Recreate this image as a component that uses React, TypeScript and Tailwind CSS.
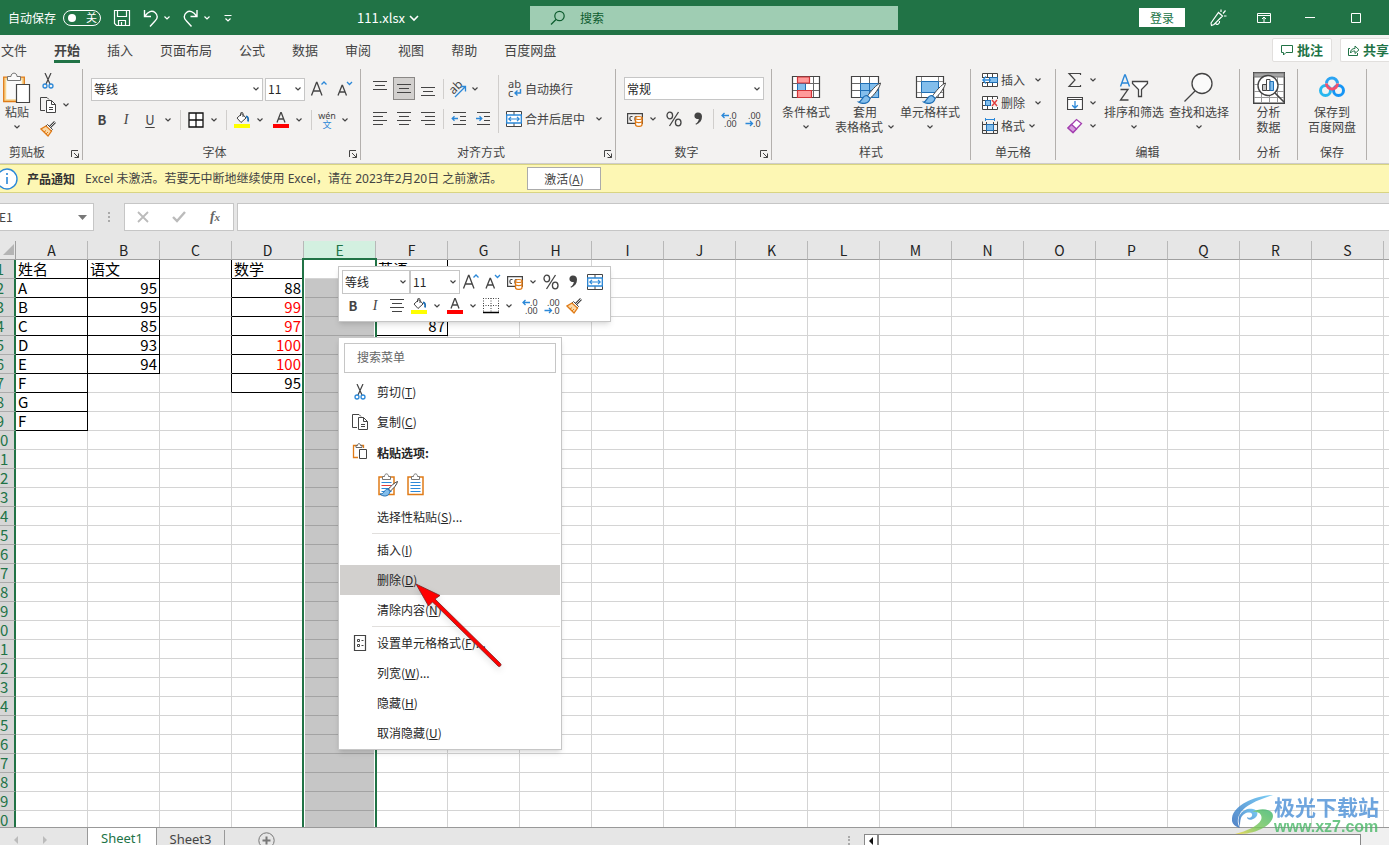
import type { ReactNode } from 'react';

type Seg = [number, number, number];

const COLS = 'ABCDEFGHIJKLMNOPQRST'.split('');
const ROWS = Array.from({ length: 30 }, (_, i) => i + 1);

const DATA: Record<string, string[]> = {
  A: ['姓名', 'A', 'B', 'C', 'D', 'E', 'F', 'G', 'F'],
  B: ['语文', '95', '95', '85', '93', '94'],
  D: ['数学', '88', '99', '97', '100', '100', '95'],
  F: ['英语', '', '', '87'],
};

const isBoxed = (col: number, row: number) => row >= 1 && row <= (DATA[COLS[col]]?.length ?? 0);

/* ---------- icons ---------- */

function Svg({ w = 16, h = 16, children }: { w?: number; h?: number; children: ReactNode }) {
  return (
    <svg width={w} height={h} viewBox={`0 0 ${w} ${h}`} fill="none" stroke="#444" className="block shrink-0" aria-hidden="true">
      {children}
    </svg>
  );
}

function Chev({ color = '#444' }: { color?: string }) {
  return (
    <Svg w={8} h={6}>
      <path d="M1.5 1.5 4 4l2.5-2.5" stroke={color} strokeWidth="1.2" />
    </Svg>
  );
}

// each segment is [y, x1, x2]
function Lines({ rows }: { rows: Seg[] }) {
  return (
    <Svg>
      {rows.map(([y, a, b]) => (
        <path key={y} d={`M${a} ${y}.5H${b}`} />
      ))}
    </Svg>
  );
}

const CENTER: Seg[] = [[1, 1, 15], [5, 3, 13], [9, 1, 15], [13, 3, 13]];
const LEFT: Seg[] = [[1, 1, 15], [5, 1, 11], [9, 1, 15], [13, 1, 11]];
const RIGHT: Seg[] = [[1, 1, 15], [5, 5, 15], [9, 1, 15], [13, 5, 15]];

function Scissors() {
  return (
    <Svg>
      <path d="M5 0 10 11M11 0 6 11" strokeWidth="1.2" />
      <circle cx="5" cy="13" r="2" stroke="#2b88d8" strokeWidth="1.3" />
      <circle cx="11" cy="13" r="2" stroke="#2b88d8" strokeWidth="1.3" />
    </Svg>
  );
}

function Copy() {
  return (
    <Svg>
      <path d="M5 13.5H.5V.5H7M7 .5l2 2" />
      <path d="M6.5 3.500h5l4 4v8h-9z" fill="#fff" />
      <path d="M11.5 3.500v4h4M9 10.500h4M9 12.500h4" />
    </Svg>
  );
}

function Brush() {
  return (
    <Svg>
      <path d="M15 1 10 6" strokeWidth="2.6" />
      <path d="M15 1 10 6" stroke="#fff" strokeWidth=".8" />
      <path d="M7.5 3.500 12.500 8.500 11 10 6 5z" fill="#fff" />
      <path d="M6 5 1 8l7 7 3.500-5z" fill="#fbd9a8" stroke="#e07b17" strokeWidth="1.3" />
      <path d="M4 11l2-1.500M6 13l2-2" stroke="#e07b17" />
    </Svg>
  );
}

function Clipboard() {
  return (
    <Svg w={28} h={32}>
      <path d="M2 6.500h18v22H2z" fill="#fafafa" stroke="#f8d58f" strokeWidth="2.5" />
      <path d="M.7 5.200h20.600v24.300H.7z" stroke="#e07b17" strokeWidth="1.3" />
      <path d="M4.500 8.500v-4H8C8 0 14 0 14 4.500h3.500v4z" fill="#fafafa" stroke="#777" />
      <path d="M13.500 12.500h13v18h-13z" fill="#fff" strokeWidth="1.2" />
    </Svg>
  );
}

function PasteSmall() {
  return (
    <Svg>
      <path d="M6 14.500H1.500v-12h10V5" fill="#fff" stroke="#e07b17" strokeWidth="1.3" />
      <path d="M4 4.500v-2h1.500C5.500 0 8.500 0 8.500 2.500H10v2z" fill="#fff" stroke="#666" />
      <path d="M7.500 6.500h7v9h-7z" fill="#fff" />
    </Svg>
  );
}

function PasteSheet({ brush = false }: { brush?: boolean }) {
  return (
    <Svg w={22} h={24}>
      <path d="M3 4h15v17.500H3z" fill="#fff" stroke="#e07b17" strokeWidth="1.5" />
      <path d="M6.500 6.500v-3h2C8.500 0 12.500 0 12.500 3.500h2v3z" fill="#fff" stroke="#777" />
      <path d="M5.500 9.500H15.500M5.500 15.500H15.500M5.500 18.500H15.500" stroke="#2b88d8" />
      <path d="M5.500 12.500H15.500" stroke={brush ? '#e23c3c' : '#2b88d8'} />
      {brush && (
        <>
          <path d="M21.500 8.500c-3 1-7 5-9 7.500l2 2c3-2.500 6.500-6.500 7-9.500z" fill="#fff" />
          <path d="M12 16c-4 0-3 5-8 5 3 3 9 3 10-2.500z" fill="#83beec" stroke="#1f6fb5" />
        </>
      )}
    </Svg>
  );
}

function GrowA({ up }: { up?: boolean }) {
  return (
    <Svg w={18} h={18}>
      {up ? (
        <>
          <path d="M1.500 15.500 6.500 2.500h.5l5 13M3.300 11h7" strokeWidth="1.3" />
          <path d="M11.500 4.500 14 2l2.500 2.500" stroke="#2b88d8" strokeWidth="1.3" />
        </>
      ) : (
        <>
          <path d="M2 15.500 6 5.500h.5l4 10M3.500 12h5.500" strokeWidth="1.3" />
          <path d="M11 2l2.500 2.500L16 2" stroke="#2b88d8" strokeWidth="1.3" />
        </>
      )}
    </Svg>
  );
}

function Borders({ dotted }: { dotted?: boolean }) {
  if (dotted) {
    return (
      <Svg>
        <path d="M.5 0v14M15.500 0v14M0 .5h16M8 0v14M0 7.500h16" strokeDasharray="1 1.5" />
        <path d="M0 14.500h16" stroke="#000" strokeWidth="1.5" />
      </Svg>
    );
  }
  return (
    <Svg>
      <path d="M1 1h14v14H1zM8 1v14M1 8h14" fill="#fff" stroke="#111" strokeWidth="1.3" />
    </Svg>
  );
}

function Fill() {
  return (
    <Svg>
      <path d="M0 12h16v4H0z" fill="#ff0" stroke="none" />
      <path d="M3 6 8 1.500l4 4.500-5 4.500z" fill="#fff" />
      <path d="M6.500 4V1.500C6.500 0 9 0 9 1.500V5" />
      <path d="M12 4.500c2 0 2.500 2 2 5" stroke="#1f6fb5" strokeWidth="1.8" />
    </Svg>
  );
}

function FontColor() {
  return (
    <Svg>
      <path d="M0 12h16v4H0z" fill="#f00" stroke="none" />
      <path d="M4 10.500 7.800.5h.4L12 10.500M5.300 7h5.400" strokeWidth="1.3" />
    </Svg>
  );
}

function Orient() {
  return (
    <Svg w={18} h={18}>
      <text x="0" y="12" transform="rotate(-45 6 8)" fontSize="12" fill="#444" stroke="none" className="font-['Noto_Sans']">ab</text>
      <path d="M6 17 16 7M11.500 6.500h5v5" stroke="#2b88d8" strokeWidth="1.3" />
    </Svg>
  );
}

function Wrap() {
  return (
    <Svg w={16} h={18}>
      <text x="2" y="8" fontSize="11" fill="#444" stroke="none" className="font-['Noto_Sans']">ab</text>
      <text x="2" y="17" fontSize="11" fill="#444" stroke="none" className="font-['Noto_Sans']">c</text>
      <path d="M14.500 9v4H9M11.500 10.500 9 13l2.500 2.500" stroke="#2b88d8" strokeWidth="1.4" />
    </Svg>
  );
}

function Merge() {
  return (
    <Svg>
      <path d="M.5.5h15v15H.5zM8 0v4M8 12v4" fill="#fff" />
      <path d="M.7 4h14.600v8H.7z" fill="#fff" stroke="#2b88d8" strokeWidth="1.3" />
      <path d="M3 8h10M5 5.800 2.800 8 5 10.200M11 5.800 13.200 8 11 10.200" stroke="#2b88d8" strokeWidth="1.2" />
    </Svg>
  );
}

function Indent({ out }: { out?: boolean }) {
  return (
    <Svg>
      <path d="M2 1.500h13M9 5.500h6M9 9.500h6M2 13.500h13" />
      <path d={out ? 'M1.5 7.500H7M3.500 5.200 1.200 7.500l2.300 2.300' : 'M1 7.500h5.500M4.500 5.200l2.300 2.300-2.300 2.300'} stroke="#2b88d8" strokeWidth="1.3" />
    </Svg>
  );
}

function Money() {
  return (
    <Svg>
      <path d="M.6 2.600h14.800v9.800H.6z" strokeWidth="1.2" />
      <path d="M5.500 5.500H4c-1.500 0-1.500 4 0 4h1M8 9.500V7c0-2 2.500-2 2.500 0" strokeWidth="1.2" />
      <path d="M8.500 7v6.500c0 2.500 6.500 2.500 6.500 0V7z" fill="#fff" stroke="#e07b17" strokeWidth="1.3" />
      <ellipse cx="11.750" cy="7" rx="3.250" ry="1.500" fill="#fff" stroke="#e07b17" strokeWidth="1.2" />
      <path d="M8.500 10.200c0 1.800 6.500 1.800 6.500 0" stroke="#e07b17" strokeWidth="1.2" />
    </Svg>
  );
}

function Percent() {
  return (
    <Svg>
      <ellipse cx="3.800" cy="4.500" rx="2.800" ry="3.300" strokeWidth="1.3" />
      <ellipse cx="12.200" cy="11.500" rx="2.800" ry="3.300" strokeWidth="1.3" />
      <path d="M12.500 1 3.500 15" strokeWidth="1.3" />
    </Svg>
  );
}

function Comma() {
  return (
    <Svg>
      <path d="M8 1.500a3.300 3.300 0 1 0 .8 6.400c-.3 2.300-1.300 3.700-3.300 4.900l.5 1C10 12 12 9.500 12 5.500 12 3 10.300 1.500 8 1.500z" fill="#444" stroke="none" />
    </Svg>
  );
}

function Decimal({ more }: { more?: boolean }) {
  return (
    <Svg w={17} h={17}>
      {more ? (
        <>
          <path d="M1 4.500h7M3.500 2 1 4.500 3.500 7" stroke="#2b88d8" strokeWidth="1.3" />
          <text x="8" y="8" fontSize="9" fill="#444" stroke="none" className="font-['Noto_Sans']">.0</text>
          <text x="3" y="16" fontSize="9" fill="#444" stroke="none" className="font-['Noto_Sans']">.00</text>
        </>
      ) : (
        <>
          <path d="M.5 12.500h7M5 10l2.500 2.500L5 15" stroke="#2b88d8" strokeWidth="1.3" />
          <text x="3" y="8" fontSize="9" fill="#444" stroke="none" className="font-['Noto_Sans']">.00</text>
          <text x="8" y="16" fontSize="9" fill="#444" stroke="none" className="font-['Noto_Sans']">.0</text>
        </>
      )}
    </Svg>
  );
}

function StyleIcon({ kind }: { kind: 'cond' | 'table' | 'cell' }) {
  return (
    <Svg w={32} h={28}>
      <path d="M2.500.5h27v21h-27z" fill="#fff" strokeWidth="1.2" />
      {kind === 'cell' && (
        <>
          <path d="M7.500 1v20M24.500 1v20M3 5.500h26M3 16.500h26" stroke="#888" />
          <path d="M7.500 5.500h17v11h-17z" fill="#83beec" stroke="#1f6fb5" />
        </>
      )}
      {kind === 'table' && (
        <>
          <path d="M11.500 1v20M20.500 1v20M3 7.500h26M3 14.500h26" stroke="#666" />
          <path d="M11.500 7.500h18v14h-18zM20.500 7.500v14M11.500 14.500h18" fill="#83beec" stroke="#1f6fb5" />
        </>
      )}
      {kind === 'cond' && (
        <>
          <path d="M7.500 1v20M15.500 1v20M23.500 1v20M3 7.500h26M3 14.500h26" stroke="#666" />
          <path d="M7.500 7.500h8v7h-8z" fill="#83beec" stroke="#1f6fb5" />
          <path d="M7.500 1h12v6h-12zM7.500 14.500h14v7h-14z" fill="#ff9a9a" stroke="#d13438" strokeWidth="1.2" />
        </>
      )}
      {kind !== 'cond' && (
        <>
          <path d="M31.500 7c-4 1.500-10 8.500-13 13l2.500 2.500c4-3.500 10-11 10.500-15.500z" fill="#fff" />
          <path d="M18 19.500c-5-.5-4.500 6-8.500 6.500 4 2.500 11 2 11.500-4z" fill="#83beec" stroke="#1f6fb5" strokeWidth="1.2" />
        </>
      )}
    </Svg>
  );
}

function CellIcon({ kind }: { kind: 'insert' | 'delete' | 'format' }) {
  if (kind === 'format') {
    return (
      <Svg>
        <path d="M.5 3.500v12h15v-12M4.500 4v12M11.500 4v12M0 6.500h16M0 12.500h16" />
        <path d="M4.500 6.500h7v6h-7z" fill="#83beec" stroke="#1f6fb5" />
        <path d="M3.500 1.500h9M3.500 0v3M12.500 0v3" stroke="#2b88d8" />
      </Svg>
    );
  }
  return (
    <Svg>
      <path d="M.5 1.500h15v13H.5zM5.500 1v14M10.500 1v14M0 5.500h16M0 10.500h16" fill="#fff" />
      {kind === 'insert' ? (
        <>
          <path d="M7.500 5.500h8v5h-8z" fill="#83beec" stroke="#1f6fb5" />
          <path d="M0 6h7v4H0z" fill="#fff" stroke="none" />
          <path d="M1 8h8M4 4.500.8 8 4 11.500" stroke="#2b88d8" strokeWidth="1.3" />
        </>
      ) : (
        <>
          <path d="M3.500 5.500h5v5h-5z" fill="#83beec" stroke="#1f6fb5" />
          <path d="M9 4h7v8H9z" fill="#f3f2f1" stroke="none" />
          <path d="m10 5 5 6M15 5l-5 6" stroke="#e23c3c" strokeWidth="1.4" />
        </>
      )}
    </Svg>
  );
}

function Sigma() {
  return (
    <Svg>
      <path d="M13.500 3V1.500H2L8 8l-6 6.500h11.500V13" strokeWidth="1.2" />
    </Svg>
  );
}

function FillDown() {
  return (
    <Svg>
      <path d="M.5 2.500h15v12H.5zM.5 4.500h15" fill="#fff" strokeWidth="1.2" />
      <path d="M8 6v7M5.200 10.200 8 13l2.800-2.800" stroke="#2b88d8" strokeWidth="1.3" />
    </Svg>
  );
}

function Eraser() {
  return (
    <Svg>
      <path d="M1 10 9.500 1.500l5 4L6 14.500z" fill="#fff" stroke="#a33fb0" strokeWidth="1.3" />
      <path d="M1 10 4.500 6.500 9.500 11 6 14.500z" fill="#d59add" stroke="#a33fb0" strokeWidth="1.3" />
    </Svg>
  );
}

function SortFilter() {
  return (
    <Svg w={30} h={30}>
      <path d="M1.500 12.500 5.700 1h.6l4.200 11.500M3 9h6.500" stroke="#2b88d8" strokeWidth="1.4" />
      <path d="M1.500 15.500h7.500L1.500 26h8" strokeWidth="1.3" />
      <path d="M13.500 7.500h15v2l-6 6v7h-3v-7l-6-6z" fill="#fff" strokeWidth="1.3" />
    </Svg>
  );
}

function FindIcon({ big = true, color = '#444' }: { big?: boolean; color?: string }) {
  return big ? (
    <Svg w={32} h={32}>
      <circle cx="19" cy="11.500" r="10" fill="#fafafa" strokeWidth="1.3" />
      <path d="M12 19 1.500 29.500" strokeWidth="1.3" />
    </Svg>
  ) : (
    <Svg>
      <circle cx="9.500" cy="6" r="4.700" stroke={color} strokeWidth="1.2" />
      <path d="M6 9.500 1 14.500" stroke={color} strokeWidth="1.2" />
    </Svg>
  );
}

function Analyze() {
  return (
    <Svg w={32} h={32}>
      <path d="M.7.7h30.600v30.600H.7z" fill="#fff" strokeWidth="1.4" />
      <path d="M1 1h30v4H1z" fill="#a6a6a6" stroke="#777" />
      <path d="M1 12.500h30M1 19.500h30M1 25.500h30M8.500 5v26M16.500 5v26M24.500 5v26" stroke="#999" />
      <circle cx="15" cy="13.500" r="10" fill="#fff" strokeWidth="1.4" />
      <path d="m22 21 9 9" strokeWidth="1.6" />
      <path d="M9.500 12.500h4v6h-4z" fill="#c8c8c8" />
      <path d="M13.500 7.500h3.500v11h-3.500z" fill="#fff" />
      <path d="M17 9.500h3.500v9H17z" fill="#83beec" stroke="#1f6fb5" />
    </Svg>
  );
}

function Netdisk() {
  return (
    <Svg w={28} h={28}>
      <circle cx="7.500" cy="14.500" r="5" stroke="#27b7ef" strokeWidth="3" />
      <circle cx="20.500" cy="14.500" r="5" stroke="#1595f5" strokeWidth="3" />
      <path d="M8.500 7.500a5.500 5.500 0 0 1 11 0" stroke="#2ba4f3" strokeWidth="3" />
      <path d="M8.500 7.500a5.500 5.500 0 1 0 11 0" stroke="#f2506e" strokeWidth="3" />
    </Svg>
  );
}

function Phonetic() {
  return (
    <span className="flex flex-col items-center text-[9px]">
      <span className="font-['Noto_Sans',sans-serif] leading-[9px]">wén</span>
      <span className="leading-[10px] text-[#2b88d8]">文</span>
    </span>
  );
}

/* ---------- controls ---------- */

function Tool({ label, children, className = 'w-6' }: { label: string; children: ReactNode; className?: string }) {
  return (
    <button type="button" aria-label={label} className={`flex h-6 shrink-0 items-center justify-center ${className}`}>
      {children}
    </button>
  );
}

function More({ label, className = 'w-3' }: { label: string; className?: string }) {
  return (
    <Tool label={`${label}选项`} className={className}>
      <Chev />
    </Tool>
  );
}

function Divider() {
  return <span className="mr-[3px] ml-1.5 h-5 w-px shrink-0 bg-[#d0cecc]" />;
}

function Picker({ label, value, className, height = 'h-[23px]' }: { label: string; value: string; className: string; height?: string }) {
  return (
    <label className={`relative flex shrink-0 items-center border border-[#c6c6c6] bg-white ${height} ${className}`}>
      <span className="sr-only">{label}</span>
      <select className="h-full w-full appearance-none pl-0.5 text-xs leading-5 text-[#262626] outline-none">
        <option>{value}</option>
      </select>
      <span className="pointer-events-none absolute right-0.5">
        <Chev />
      </span>
    </label>
  );
}

function Group({ name, launcher, crop, className, children }: { name: string; launcher?: boolean; crop?: boolean; className: string; children: ReactNode }) {
  return (
    <section className={`flex shrink-0 flex-col border-r border-[#b3b0ad] ${className}`}>
      <div className="flex-1">{children}</div>
      <div className="flex h-4 items-center">
        <span className={`flex-1 text-center leading-[18px] ${crop ? 'pr-3.5' : ''}`}>{name}</span>
        {launcher && (
          <button type="button" aria-label={`${name}设置`} className="mt-1 w-3.5 pl-0.5">
            <Svg w={10} h={10}>
              <path d="M1.500 8V1.500H8M4 4l4.500 4.500M8.500 4.500v4H4.500" />
            </Svg>
          </button>
        )}
      </div>
    </section>
  );
}

function Big({ icon, lines, className, arrow }: { icon: ReactNode; lines: string[]; className: string; arrow?: boolean }) {
  return (
    <button type="button" className={`flex shrink-0 flex-col items-center leading-[15px] ${className}`}>
      <span className="flex h-[35px] items-end justify-center">{icon}</span>
      <span className="whitespace-nowrap">{lines[0]}</span>
      <span className="flex h-[15px] items-center gap-1 whitespace-nowrap">
        {lines[1]}
        {arrow && <Chev />}
      </span>
    </button>
  );
}

/* ---------- page sections ---------- */

function TitleBar() {
  return (
    <header className="flex h-[35px] shrink-0 items-center bg-[#217346] text-white">
      <div className="flex w-[530px] shrink-0 items-center pl-2">
        <label className="flex items-center gap-[7px] text-xs">
          自动保存
          <span className="relative flex h-4 w-[38px] items-center rounded-full border border-white">
            <input type="checkbox" className="absolute inset-0 appearance-none" />
            <span className="ml-1 size-2 rounded-full bg-white" />
            <span className="ml-2.5 text-[11px] leading-none">关</span>
          </span>
        </label>
        <button type="button" aria-label="保存" className="ml-3">
          <Svg w={18} h={18}>
            <path d="M1.500 1.500h15v15h-13l-2-2zM4.500 1.500v6h9v-6M5.500 16.500v-5h7v5M8.500 16.500V13" stroke="#fff" strokeWidth="1.2" />
          </Svg>
        </button>
        <button type="button" aria-label="撤消" className="ml-3">
          <Svg w={16} h={18}>
            <path d="M1.500 1v6.500H8M2 7C5 2.500 9 1 12 3.500s3 6 0 8.500l-5 5.500" stroke="#fff" strokeWidth="1.4" />
          </Svg>
        </button>
        <button type="button" aria-label="撤消列表" className="ml-1">
          <Chev color="#fff" />
        </button>
        <button type="button" aria-label="恢复" className="ml-3">
          <Svg w={16} h={18}>
            <path d="M14 1v6.500H7.500M13.500 7C10.500 2.500 6.500 1 3.500 3.500s-3 6 0 8.500l5 5.500" stroke="#fff" strokeWidth="1.4" />
          </Svg>
        </button>
        <button type="button" aria-label="恢复列表" className="ml-1">
          <Chev color="#fff" />
        </button>
        <button type="button" aria-label="自定义" className="ml-3">
          <Svg w={10} h={8}>
            <path d="M1.500 1.500h7M2.500 4.500 5 7l2.500-2.500" stroke="#fff" strokeWidth="1.2" />
          </Svg>
        </button>
        <button type="button" className="ml-[124px] flex items-center gap-1 text-[13px]">
          111.xlsx
          <Svg w={10} h={8}>
            <path d="M1 2l4 4 4-4" stroke="#fff" strokeWidth="1.6" />
          </Svg>
        </button>
      </div>
      <label className="flex h-6 w-[368px] items-center bg-[#9fcdb3] pl-5 text-[#0e5c2f]">
        <FindIcon big={false} color="#0e5c2f" />
        <input aria-label="搜索" placeholder="搜索" className="ml-3.5 w-full bg-transparent text-xs leading-5 outline-none placeholder:text-[#0e5c2f]" />
      </label>
      <div className="ml-auto flex shrink-0 items-center pr-2.5">
        <button type="button" className="mr-2.5 h-[19px] w-[46px] bg-white text-xs leading-[19px] text-[#217346]">登录</button>
        <button type="button" aria-label="即将推出的功能" className="flex w-[46px] justify-center">
          <Svg w={18} h={18}>
            <path d="M2 14 9.500 3.500l4 3.500L5 15.500l-2.500 1zM6.500 14c1 2.500 4.500 1.500 4-2M12 3V.5M14 4.500l2.500-3M15 7h2.500" stroke="#fff" strokeWidth="1.2" />
          </Svg>
        </button>
        <button type="button" aria-label="功能区显示选项" className="flex w-[46px] justify-center">
          <Svg w={14} h={12}>
            <path d="M.5 1.500h13v9H.5zM.5 3.500h13M7 10V5.500M5 7l2-2 2 2" stroke="#fff" />
          </Svg>
        </button>
        <button type="button" aria-label="最小化" className="flex w-[46px] justify-center">
          <Svg w={10} h={10}>
            <path d="M0 4.500h10" stroke="#fff" />
          </Svg>
        </button>
        <button type="button" aria-label="最大化" className="flex w-[46px] justify-center">
          <Svg w={10} h={10}>
            <path d="M.5.5h9v9h-9z" stroke="#fff" />
          </Svg>
        </button>
      </div>
    </header>
  );
}

const TABS = ['文件', '开始', '插入', '页面布局', '公式', '数据', '审阅', '视图', '帮助', '百度网盘'];

function TabRow() {
  return (
    <nav className="flex h-[30px] shrink-0 items-center text-[13px] text-[#444]">
      <div className="flex gap-[27px] pl-px">
        {TABS.map((t) => (
          <button
            key={t}
            type="button"
            className={t === '开始' ? 'relative font-bold whitespace-nowrap after:absolute after:inset-x-0 after:-bottom-[3px] after:h-[3px] after:bg-[#217346]' : 'whitespace-nowrap'}
          >
            {t}
          </button>
        ))}
      </div>
      <div className="ml-auto flex gap-2 font-bold text-[#217346]">
        <button type="button" className="flex h-6 w-[60px] items-center justify-center gap-1 rounded-xs border border-[#e1dfdd] bg-white">
          <Svg w={12} h={12}>
            <path d="M.5 1.500h11v7H5l-2.500 2.500V8.500h-2z" stroke="#217346" />
          </Svg>
          批注
        </button>
        <button type="button" className="flex h-6 w-[49px] items-center gap-[3px] overflow-hidden rounded-l-xs border border-r-0 border-[#e1dfdd] bg-white pl-1.5 whitespace-nowrap">
          <Svg w={13} h={12}>
            <path d="M3 4.500H1.500v7h9V9M3.500 9c0-3 1.500-4.500 4.500-4.500V2l4 3.800-4 3.700V7c-2 0-3.500.5-4.500 2z" stroke="#217346" />
          </Svg>
          共享
        </button>
      </div>
    </nav>
  );
}

function Ribbon() {
  return (
    <div className="flex h-[99px] shrink-0 overflow-hidden border-b border-[#d2d0ce] pt-1 pb-[3px] text-xs text-[#444]">
      <Group name="剪贴板" launcher crop className="w-[83px]">
        <div className="flex">
          <Big icon={<Clipboard />} lines={['粘贴']} arrow className="ml-px w-8" />
          <div className="ml-[3px] flex flex-col">
            <Tool label="剪切"><Scissors /></Tool>
            <div className="flex">
              <Tool label="复制"><Copy /></Tool>
              <More label="复制" />
            </div>
            <Tool label="格式刷"><Brush /></Tool>
          </div>
        </div>
      </Group>

      <Group name="字体" launcher className="w-[278px]">
        <div className="flex flex-col gap-[7px] pt-2">
          <div className="flex items-center gap-0.5 pl-2">
            <Picker label="字体" value="等线" className="w-[172px]" />
            <Picker label="字号" value="11" className="w-10" />
            <Tool label="增大字号"><GrowA up /></Tool>
            <Tool label="减小字号"><GrowA /></Tool>
          </div>
          <div className="flex items-center pl-[7px]">
            <Tool label="加粗"><b className="text-[13px]">B</b></Tool>
            <Tool label="倾斜"><i className="font-['Liberation_Serif',serif] text-sm">I</i></Tool>
            <Tool label="下划线"><u className="text-[13px] underline-offset-2">U</u></Tool>
            <More label="下划线" />
            <Divider />
            <Tool label="边框"><Borders /></Tool>
            <More label="边框" />
            <Divider />
            <Tool label="填充颜色"><Fill /></Tool>
            <More label="填充颜色" />
            <Tool label="字体颜色" className="ml-[3px] w-6"><FontColor /></Tool>
            <More label="字体颜色" />
            <Divider />
            <Tool label="拼音"><Phonetic /></Tool>
            <More label="拼音" />
          </div>
        </div>
      </Group>

      <Group name="对齐方式" launcher className="w-[255px]">
        <div className="flex pt-1.5">
          <div className="flex flex-col gap-[7px] pt-0.5 pl-[7px]">
            <div className="flex h-[23px] items-center">
              <Tool label="顶端对齐"><Lines rows={[[0, 1, 15], [4, 3, 13], [8, 1, 15]]} /></Tool>
              <button type="button" aria-label="垂直居中" className="mx-px flex h-[23px] w-[22px] items-center justify-center border border-[#8a8886] bg-[#d2d0ce]">
                <Lines rows={[[3, 1, 15], [7, 3, 13], [11, 1, 15]]} />
              </button>
              <Tool label="底端对齐"><Lines rows={[[6, 1, 15], [10, 3, 13], [14, 1, 15]]} /></Tool>
              <span className="mx-[3px] h-5 w-px bg-[#d0cecc]" />
              <Tool label="方向" className="w-[22px]"><Orient /></Tool>
              <More label="方向" />
            </div>
            <div className="flex items-center">
              <Tool label="左对齐"><Lines rows={LEFT} /></Tool>
              <Tool label="居中"><Lines rows={CENTER} /></Tool>
              <Tool label="右对齐"><Lines rows={RIGHT} /></Tool>
              <span className="mx-[3px] h-5 w-px bg-[#d0cecc]" />
              <Tool label="减少缩进量"><Indent out /></Tool>
              <Tool label="增加缩进量"><Indent /></Tool>
            </div>
          </div>
          <span className="ml-[3px] h-[58px] w-px bg-[#d0cecc]" />
          <div className="flex flex-col gap-[7px] pt-0.5 pl-[7px]">
            <button type="button" className="flex h-[23px] items-center gap-[3px]">
              <Wrap />
              自动换行
            </button>
            <div className="flex items-center gap-2">
              <button type="button" className="flex h-6 items-center gap-[3px]">
                <Merge />
                合并后居中
              </button>
              <More label="合并后居中" />
            </div>
          </div>
        </div>
      </Group>

      <Group name="数字" launcher className="w-[156px]">
        <div className="flex flex-col gap-[7px] pt-2">
          <div className="pl-2">
            <Picker label="数字格式" value="常规" className="w-[140px]" />
          </div>
          <div className="flex items-center pl-[7px]">
            <Tool label="会计数字格式"><Money /></Tool>
            <More label="会计数字格式" />
            <Tool label="百分比样式" className="ml-[3px] w-6"><Percent /></Tool>
            <Tool label="千位分隔样式"><Comma /></Tool>
            <span className="mx-[3px] h-5 w-px bg-[#d0cecc]" />
            <Tool label="增加小数位数"><Decimal more /></Tool>
            <Tool label="减少小数位数"><Decimal /></Tool>
          </div>
        </div>
      </Group>

      <Group name="样式" className="w-[199px]">
        <div className="flex pl-2">
          <Big icon={<StyleIcon kind="cond" />} lines={['条件格式']} arrow className="w-[52px]" />
          <Big icon={<StyleIcon kind="table" />} lines={['套用', '表格格式']} arrow className="w-[66px]" />
          <Big icon={<StyleIcon kind="cell" />} lines={['单元格样式']} arrow className="w-16" />
        </div>
      </Group>

      <Group name="单元格" className="w-[85px]">
        <div className="flex flex-col pl-[11px]">
          {(['insert', 'delete', 'format'] as const).map((kind, i) => (
            <button key={kind} type="button" className="flex h-[22px] items-center gap-[3px] not-last:mb-px">
              <CellIcon kind={kind} />
              {['插入', '删除', '格式'][i]}
              <span className={kind === 'format' ? '' : 'pl-1.5'}><Chev /></span>
            </button>
          ))}
        </div>
      </Group>

      <Group name="编辑" className="w-[184px]">
        <div className="flex pl-[7px]">
          <div className="flex flex-col">
            {[<Sigma key="s" />, <FillDown key="f" />, <Eraser key="e" />].map((icon, i) => (
              <button key={i} type="button" aria-label={['求和', '填充', '清除'][i]} className="flex h-[22px] items-center gap-1.5 pl-1 not-last:mb-px">
                {icon}
                <Chev />
              </button>
            ))}
          </div>
          <Big icon={<SortFilter />} lines={['排序和筛选']} arrow className="ml-[5px] w-16" />
          <Big icon={<FindIcon />} lines={['查找和选择']} arrow className="ml-px w-16" />
        </div>
      </Group>

      <Group name="分析" className="w-[58px]">
        <Big icon={<Analyze />} lines={['分析', '数据']} className="w-full" />
      </Group>

      <Group name="保存" className="w-[69px]">
        <Big icon={<Netdisk />} lines={['保存到', '百度网盘']} className="w-full" />
      </Group>
    </div>
  );
}

function Notice() {
  return (
    <div className="flex h-[29px] shrink-0 items-center overflow-hidden border-y border-[#d8d483] bg-[#fdf7b4] text-xs text-[#444] shadow-sm">
      <span className="-ml-1">
        <Svg w={22} h={22}>
          <circle cx="11" cy="11" r="10" fill="#fff" stroke="#2b88d8" strokeWidth="1.4" />
          <path d="M11 9v7M11 5v2" stroke="#2b88d8" strokeWidth="1.6" />
        </Svg>
      </span>
      <b className="ml-[9px] text-[#333]">产品通知</b>
      <span className="ml-2.5 w-[432px] font-['Noto_Sans','Noto_Sans_CJK_SC',sans-serif] whitespace-nowrap">
        Excel 未激活。若要无中断地继续使用 Excel，请在 2023年2月20日 之前激活。
      </span>
      <button type="button" className="ml-2.5 h-[23px] w-[74px] border border-[#ababab] bg-white">
        激活(<u>A</u>)
      </button>
    </div>
  );
}

function FormulaBar() {
  return (
    <div className="flex h-12 shrink-0 items-center bg-[#e6e6e6] text-xs text-[#444]">
      <label className="relative flex h-7 w-[94px] items-center overflow-hidden border border-l-0 border-[#c6c6c6] bg-white">
        <input aria-label="名称框" defaultValue="E1" className="-ml-px w-16 leading-5 outline-none" />
        <svg width="9" height="5" viewBox="0 0 9 5" className="absolute right-1.5" aria-hidden="true">
          <path d="M0 0h9L4.500 5z" fill="#777" />
        </svg>
      </label>
      <span className="mx-3.5 h-2.5 border-l-2 border-dotted border-[#aaa]" />
      <div className="flex h-7 w-[110px] items-center border border-[#c6c6c6] bg-white">
        <button type="button" aria-label="取消" className="flex w-9 justify-center">
          <Svg w={12} h={12}>
            <path d="m1 1 10 10M11 1 1 11" stroke="#bbb" strokeWidth="1.8" />
          </Svg>
        </button>
        <button type="button" aria-label="输入" className="flex w-9 justify-center">
          <Svg w={14} h={12}>
            <path d="m1 6 4 4 8-9" stroke="#bbb" strokeWidth="2.4" />
          </Svg>
        </button>
        <button type="button" aria-label="插入函数" className="flex w-9 items-baseline justify-center font-['Liberation_Serif',serif] text-sm font-bold text-[#666] italic">
          f<span className="text-[11px]">x</span>
        </button>
      </div>
      <input aria-label="编辑栏" className="ml-[3px] h-7 min-w-0 flex-1 border border-r-0 border-[#c6c6c6] bg-white px-2 outline-none" />
    </div>
  );
}

function Grid() {
  return (
    <div className="relative min-h-0 flex-1 overflow-hidden bg-white">
      <table className="-ml-3.5 w-0 table-fixed border-separate border-spacing-0 text-[15px] leading-[18px]">
        <thead>
          <tr className="h-[19px] bg-[#e6e6e6]">
            <th className="w-[30px] border-r border-b border-[#9f9f9f] p-0">
              <svg width="12" height="12" viewBox="0 0 12 12" className="ml-auto" aria-hidden="true">
                <path d="M11 0v11H0z" fill="#b4b4b4" />
              </svg>
            </th>
            {COLS.map((c) => (
              <th
                key={c}
                className={`w-[72px] border-r border-b border-r-[#b8b8b8] border-b-[#9f9f9f] p-0 text-center text-sm leading-[18px] font-normal ${
                  c === 'E' ? 'bg-[#d3f0e0] text-[#217346]' : 'text-[#222]'
                }`}
              >
                {c}
              </th>
            ))}
          </tr>
        </thead>
        <tbody>
          {ROWS.map((r) => (
            <tr key={r} className="h-[19px]">
              <th className="border-r-2 border-b border-r-[#217346] border-b-[#ababab] bg-[#d6d6d6] p-0 text-center font-normal text-[#217346]">{r}</th>
              {COLS.map((c, i) => {
                const v = DATA[c]?.[r - 1] ?? '';
                const boxed = isBoxed(i, r);
                const right = boxed || (i + 1 < COLS.length && c !== 'E' && isBoxed(i + 1, r));
                const line =
                  c === 'E' && r > 1
                    ? 'bg-[#c6c6c6] border-[#a3a3a3]'
                    : `${right ? 'border-r-black' : 'border-r-[#d4d4d4]'} ${boxed ? 'border-b-black' : 'border-b-[#d4d4d4]'}`;
                const num = r > 1 && c !== 'A';
                const red = c === 'D' && (v === '99' || v === '97' || v === '100');
                return (
                  <td
                    key={c}
                    className={`border-r border-b px-0.5 py-0 whitespace-nowrap ${line} ${num ? 'text-right' : 'text-left'} ${
                      red ? 'text-[#f00]' : 'text-black'
                    }`}
                  >
                    {v}
                  </td>
                );
              })}
            </tr>
          ))}
        </tbody>
      </table>
      {/* selected column outline */}
      <div className="absolute top-[17px] -bottom-1 left-[302px] w-[75px] border-2 border-[#217346]">
        <div className="h-full border-x border-white" />
      </div>
    </div>
  );
}

function SheetTabs() {
  return (
    <footer className="flex h-[18px] shrink-0 overflow-hidden border-t border-[#999] bg-[#e6e6e6] font-['Noto_Sans',sans-serif] text-[13px] leading-[22px] text-[#444]">
      <div className="flex w-[87px] gap-6 pt-2 pl-3.5">
        <svg width="5" height="8" viewBox="0 0 5 8" aria-hidden="true"><path d="M4 0v8L0 4z" fill="#bbb" /></svg>
        <svg width="5" height="8" viewBox="0 0 5 8" aria-hidden="true"><path d="M0 0v8l4-4z" fill="#bbb" /></svg>
      </div>
      <button type="button" className="-mt-px h-[19px] w-[70px] overflow-hidden border-x border-[#999] bg-white text-[#217346]">Sheet1</button>
      <button type="button" className="mt-0.5 h-4 w-[68px] border-r border-[#999] leading-[18px]">Sheet3</button>
      <button type="button" aria-label="新工作表" className="mt-1 ml-[33px] self-start">
        <Svg w={17} h={17}>
          <circle cx="8.500" cy="8.500" r="7.700" stroke="#777" />
          <path d="M8.500 4.500v8M4.500 8.500h8" stroke="#777" strokeWidth="2" />
        </Svg>
      </button>
      <span className="mt-2 ml-auto border-l-2 border-dotted border-[#aaa]" />
      <div className="mt-1.5 ml-3.5 flex w-[497px] border-t border-r border-l border-[#888] bg-white">
        <button type="button" aria-label="向左滚动" className="flex w-3.5 justify-center border-r-2 border-[#888] pt-0.5">
          <svg width="4" height="8" viewBox="0 0 4 8" aria-hidden="true"><path d="M4 0v8L0 4z" fill="#111" /></svg>
        </button>
      </div>
      <span className="w-7 bg-[#f0f0f0]" />
    </footer>
  );
}

function MiniBar() {
  const btn = 'w-[22px]';
  const more = 'w-3.5';
  return (
    <div className="absolute top-[266px] left-[338px] flex w-[273px] flex-col border border-[#c6c6c6] bg-white p-[3px] text-xs text-[#444] shadow-md">
      <div className="flex items-center">
        <Picker label="字体" value="等线" className="w-[68px]" height="h-6" />
        <Picker label="字号" value="11" className="w-[50px]" height="h-6" />
        <Tool label="增大字号" className={btn}><GrowA up /></Tool>
        <Tool label="减小字号" className={btn}><GrowA /></Tool>
        <Tool label="会计数字格式" className={btn}><Money /></Tool>
        <More label="会计数字格式" className={more} />
        <Tool label="百分比样式" className={btn}><Percent /></Tool>
        <Tool label="千位分隔样式" className={btn}><Comma /></Tool>
        <Tool label="合并后居中" className={btn}><Merge /></Tool>
      </div>
      <div className="flex items-center">
        <Tool label="加粗" className={btn}><b className="text-[13px]">B</b></Tool>
        <Tool label="倾斜" className={btn}><i className="font-['Liberation_Serif',serif] text-sm">I</i></Tool>
        <Tool label="居中" className={btn}><Lines rows={CENTER} /></Tool>
        <Tool label="填充颜色" className={btn}><Fill /></Tool>
        <More label="填充颜色" className={more} />
        <Tool label="字体颜色" className={btn}><FontColor /></Tool>
        <More label="字体颜色" className={more} />
        <Tool label="边框" className={btn}><Borders dotted /></Tool>
        <More label="边框" className={more} />
        <Tool label="增加小数位数" className="ml-[3px] w-[22px]"><Decimal more /></Tool>
        <Tool label="减少小数位数" className={btn}><Decimal /></Tool>
        <Tool label="格式刷" className={btn}><Brush /></Tool>
      </div>
    </div>
  );
}

function Item({ text, k, tail = '', icon, active }: { text: string; k: string; tail?: string; icon?: ReactNode; active?: boolean }) {
  return (
    <button type="button" className={`flex h-[30px] w-full items-center pb-px ${active ? 'bg-[#d2d0ce]' : ''}`}>
      <span className="flex w-[37px] justify-center pl-[3px]">{icon}</span>
      <span>
        {text}(<u>{k}</u>){tail}
      </span>
    </button>
  );
}

function ContextMenu() {
  const sep = <div className="mb-px ml-8 h-0.5 border-b border-[#e1dfdd]" />;
  return (
    <div className="absolute top-[337px] left-[338px] flex w-[224px] flex-col border border-[#c6c6c6] bg-white px-px pb-px text-xs text-[#262626] shadow-md">
      <input aria-label="搜索菜单" placeholder="搜索菜单" className="mx-1 mt-[5px] mb-1 h-[30px] border border-[#c6c6c6] pb-1 pl-3 outline-none placeholder:text-[#666]" />
      <Item text="剪切" k="T" icon={<Scissors />} />
      <Item text="复制" k="C" icon={<Copy />} />
      <div className="flex h-[33px] items-center pb-px font-bold">
        <span className="flex w-[37px] justify-center pb-1 pl-[3px]"><PasteSmall /></span>
        粘贴选项:
      </div>
      <div className="flex h-8 items-center gap-[7px] pb-0.5 pl-9">
        <button type="button" aria-label="保留源格式"><PasteSheet brush /></button>
        <button type="button" aria-label="粘贴"><PasteSheet /></button>
      </div>
      <Item text="选择性粘贴" k="S" tail="..." />
      {sep}
      <Item text="插入" k="I" />
      <Item text="删除" k="D" active />
      <Item text="清除内容" k="N" />
      {sep}
      <Item
        text="设置单元格格式"
        k="F"
        tail="..."
        icon={
          <Svg>
            <path d="M2.500.5h11v15h-11z" strokeWidth="1.2" />
            <path d="M5.500 4.500h2v2h-2zM5.500 9.500h2v2h-2zM9.500 5.500h2M9.500 10.500h2" />
          </Svg>
        }
      />
      <Item text="列宽" k="W" tail="..." />
      <Item text="隐藏" k="H" />
      <Item text="取消隐藏" k="U" />
    </div>
  );
}

function Pointer() {
  return (
    <svg width="100" height="96" viewBox="0 0 100 96" className="pointer-events-none absolute top-[578px] left-[410px] drop-shadow-md" aria-hidden="true">
      <path d="M6 6 30 17.500 25 21 90.500 85.500a1.500 1.500 0 0 1-2.500 2.500L22.500 24 18.500 28z" fill="#f00" stroke="#7a2020" strokeWidth=".8" />
    </svg>
  );
}

function Watermark() {
  return (
    <div className="pointer-events-none absolute right-2.5 bottom-[9px] flex items-center opacity-80">
      <svg width="42" height="40" viewBox="0 0 42 40" aria-hidden="true">
        <defs>
          <linearGradient id="blue" x1="1" y1="0" x2="0" y2="1">
            <stop offset="0" stopColor="#5cc4f5" />
            <stop offset="1" stopColor="#2763b8" />
          </linearGradient>
          <linearGradient id="green" x1="1" y1="0" x2="0" y2="1">
            <stop offset="0" stopColor="#35b36b" />
            <stop offset=".6" stopColor="#7cc858" />
            <stop offset="1" stopColor="#f3d83a" />
          </linearGradient>
        </defs>
        <path d="M41 0C22 1 2 10 0 23c-1 5 3 9 8 10C2 24 9 14 19 9c7-4 14-6 22-9z" fill="url(#blue)" />
        <path d="M8 31C3 21 12 12 21 14c5 1 6 6 2 9-4 3-8 2-8-1 2 2 6 0 5-3-2-3-9-1-11 4-1 3-1 6-1 8z" fill="url(#blue)" />
        <path d="M20 17c9-5 21-3 21 4 0 8-16 19-38 18 12-3 23-8 26-14 2-5-2-9-9-8z" fill="url(#green)" />
      </svg>
      <div className="flex flex-col">
        <span className="text-[21px] leading-6 font-bold text-[#4a8fd6]">极光下载站</span>
        <span className="font-['Liberation_Sans',sans-serif] text-base leading-[18px] font-bold text-[#4bb868]">www.xz7.com</span>
      </div>
    </div>
  );
}

export default function App() {
  return (
    <div className="relative flex h-screen flex-col overflow-hidden bg-[#f3f2f1] font-['Noto_Sans_CJK_SC',sans-serif]">
      <TitleBar />
      <TabRow />
      <Ribbon />
      <Notice />
      <FormulaBar />
      <Grid />
      <SheetTabs />
      <MiniBar />
      <ContextMenu />
      <Pointer />
      <Watermark />
    </div>
  );
}
